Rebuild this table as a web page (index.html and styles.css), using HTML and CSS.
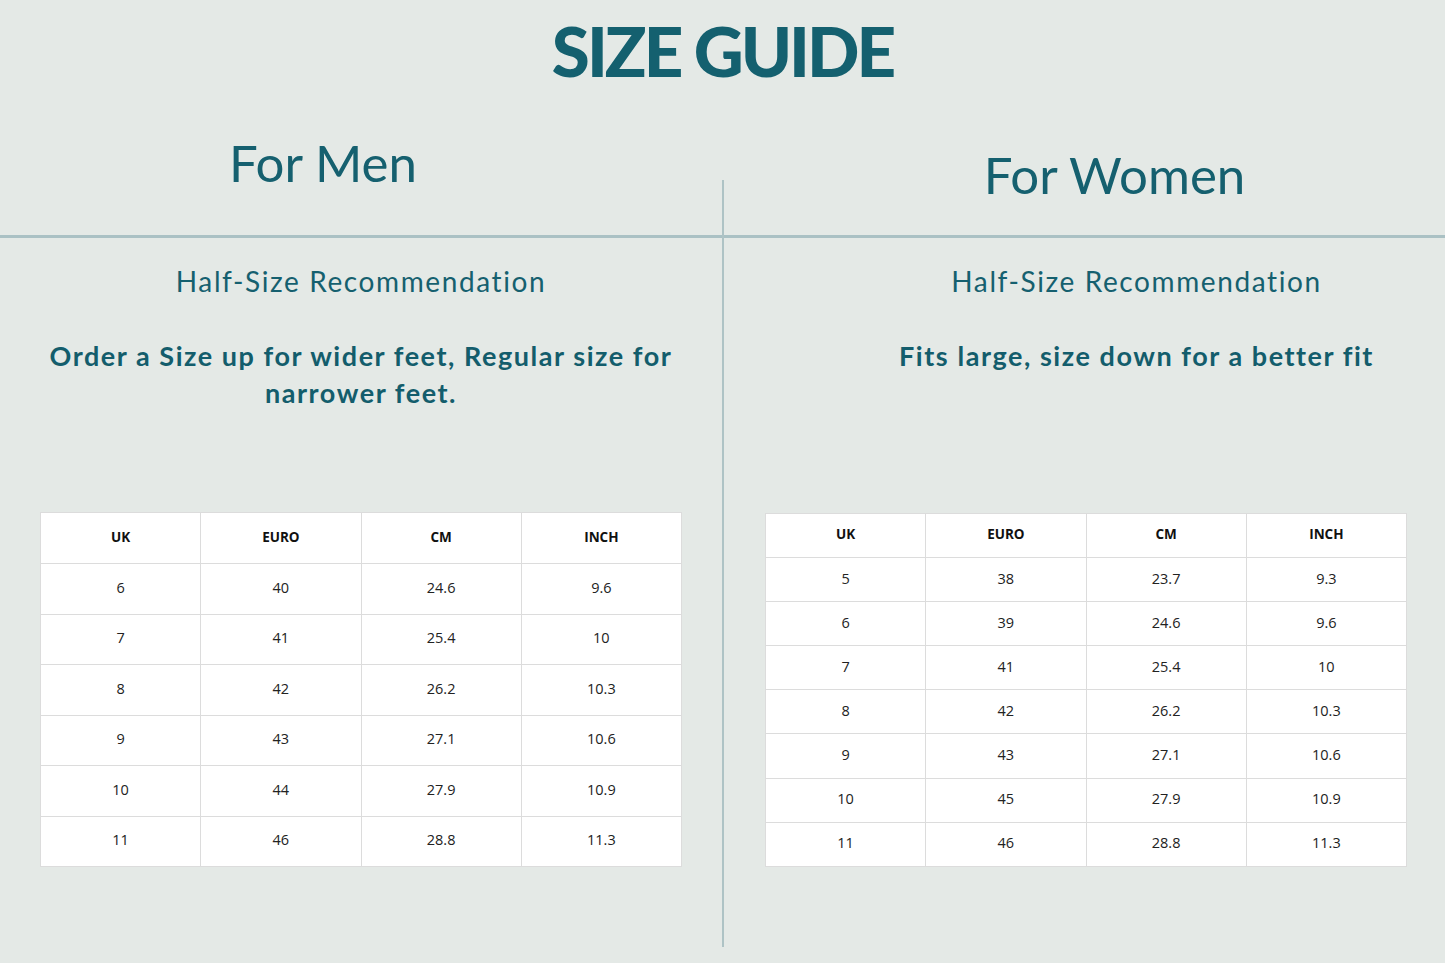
FILE: index.html
```html
<!DOCTYPE html>
<html lang="en">
<head>
<meta charset="utf-8">
<title>Size Guide</title>
<link rel="stylesheet" href="styles.css">
</head>
<body>
<div class="page">
  <h1 class="title">SIZE GUIDE</h1>
  <div class="split">
    <section class="col col-men">
      <div class="col-head"><h2 class="heading">For Men</h2></div>
      <div class="col-body">
        <p class="sub">Half-Size Recommendation</p>
        <p class="note">Order a Size up for wider feet, Regular size for narrower feet.</p>
        <table class="sizes">
          <thead><tr><th>UK</th><th>EURO</th><th>CM</th><th>INCH</th></tr></thead>
          <tbody>
            <tr><td>6</td><td>40</td><td>24.6</td><td>9.6</td></tr>
            <tr><td>7</td><td>41</td><td>25.4</td><td>10</td></tr>
            <tr><td>8</td><td>42</td><td>26.2</td><td>10.3</td></tr>
            <tr><td>9</td><td>43</td><td>27.1</td><td>10.6</td></tr>
            <tr><td>10</td><td>44</td><td>27.9</td><td>10.9</td></tr>
            <tr><td>11</td><td>46</td><td>28.8</td><td>11.3</td></tr>
          </tbody>
        </table>
      </div>
    </section>
    <div class="divider"></div>
    <section class="col col-women">
      <div class="col-head"><h2 class="heading">For Women</h2></div>
      <div class="col-body">
        <p class="sub">Half-Size Recommendation</p>
        <p class="note">Fits large, size down for a better fit</p>
        <table class="sizes">
          <thead><tr><th>UK</th><th>EURO</th><th>CM</th><th>INCH</th></tr></thead>
          <tbody>
            <tr><td>5</td><td>38</td><td>23.7</td><td>9.3</td></tr>
            <tr><td>6</td><td>39</td><td>24.6</td><td>9.6</td></tr>
            <tr><td>7</td><td>41</td><td>25.4</td><td>10</td></tr>
            <tr><td>8</td><td>42</td><td>26.2</td><td>10.3</td></tr>
            <tr><td>9</td><td>43</td><td>27.1</td><td>10.6</td></tr>
            <tr><td>10</td><td>45</td><td>27.9</td><td>10.9</td></tr>
            <tr><td>11</td><td>46</td><td>28.8</td><td>11.3</td></tr>
          </tbody>
        </table>
      </div>
    </section>
  </div>
</div>
</body>
</html>
```

FILE: styles.css
```css
* { box-sizing: border-box; }
html, body { margin: 0; padding: 0; }
body {
  background: #e4e9e6;
  width: 1445px;
  height: 963px;
  overflow: hidden;
  font-family: "Lato", "Open Sans", sans-serif;
  color: #15606f;
}
.page { width: 1445px; height: 963px; }
.title {
  margin: 0;
  height: 110px;
  padding-top: 14px;
  text-align: center;
  font-family: "Lato", sans-serif;
  font-weight: 900;
  font-size: 69px;
  line-height: 74px;
  letter-spacing: -3px;
  color: #14606f;
}
.split {
  display: grid;
  grid-template-columns: 722px 2px 721px;
}
.divider {
  margin-top: 70px;
  height: 767px;
  background: #aec3c5;
}
.col-head {
  height: 128px;
  border-bottom: 3px solid #aac1c4;
}
.heading {
  margin: 0;
  font-weight: 400;
  font-size: 51px;
  line-height: 51px;
  text-align: center;
  color: #15606f;
}
.col-men .heading { padding-top: 27px; padding-right: 76px; }
.col-women .heading { padding-top: 39px; padding-left: 60px; }
.col-body { display: flex; flex-direction: column; }
.sub {
  margin: 26px 0 0;
  font-size: 28px;
  line-height: 34px;
  letter-spacing: 1.6px;
  text-align: center;
}
.note {
  margin: 39px 0 0;
  font-weight: 700;
  font-size: 27px;
  line-height: 37px;
  letter-spacing: 1.55px;
  text-align: center;
  color: #135d6c;
}
.col-women .sub, .col-women .note { padding-left: 104px; }
.col-men .note { padding: 0 30px; }
.sizes {
  border-collapse: collapse;
  background: #fff;
  width: 642px;
  table-layout: fixed;
  font-family: "Open Sans", sans-serif;
  color: #222;
}
.col-men .sizes { margin: 101px 0 0 40px; }
.col-women .sizes { margin: 139px 0 0 41px; }
.sizes th, .sizes td {
  border: 1px solid #dcdcdc;
  text-align: center;
  padding: 0 0 3px;
}
.sizes th { font-weight: 700; font-size: 13.5px; color: #111; }
.sizes td { font-size: 14.5px; }
.col-men .sizes th { height: 51px; }
.col-men .sizes td { height: 50.5px; }
.col-women .sizes th, .col-women .sizes td { height: 44.1px; }
```
